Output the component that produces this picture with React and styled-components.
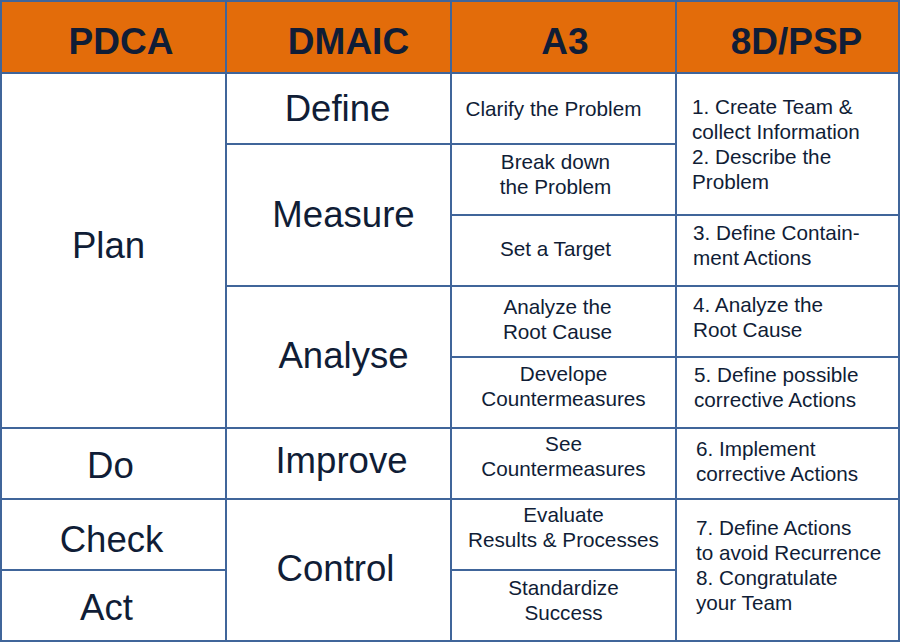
import styled, { createGlobalStyle } from "styled-components";

const theme = {
  line: "#40659a",
  orange: "#e36c0a",
  ink: "#101d36",
};

const GlobalStyle = createGlobalStyle`
  html, body {
    margin: 0;
    padding: 0;
    background: #ffffff;
  }
  body {
    font-family: "Liberation Sans", Arial, sans-serif;
    color: ${theme.ink};
  }
`;

const Table = styled.div`
  display: grid;
  grid-template-columns: 223px 223px 223px 221px;
  grid-template-rows: 70px repeat(8, 69px);
  gap: 2px;
  padding: 2px;
  width: 900px;
  box-sizing: border-box;
  background-color: ${theme.line};
`;

const Head = styled.div`
  display: flex;
  align-items: center;
  justify-content: center;
  background-color: ${theme.orange};
  font-size: 37px;
  font-weight: 700;
  padding-top: 9px;
  padding-left: ${(p) => p.$shift || 0}px;
`;

const Cell = styled.div`
  grid-column: ${(p) => p.$col};
  grid-row: ${(p) => p.$row} / span ${(p) => p.$span || 1};
  display: flex;
  align-items: center;
  justify-content: center;
  background-color: white;
`;

// $dx nudges the centred word left (<0) or right (>0)
const Phase = styled(Cell)`
  font-size: 36.6px;
  padding-bottom: ${(p) => p.$lift || 0}px;
  padding-top: ${(p) => p.$drop || 0}px;
  padding-left: ${(p) => Math.max(0, (p.$dx || 0) * 2)}px;
  padding-right: ${(p) => Math.max(0, -(p.$dx || 0) * 2)}px;
`;

const Step = styled(Cell)`
  font-size: 20.7px;
  line-height: 25px;
  text-align: center;
  padding-right: ${(p) => p.$shift || 0}px;
  padding-bottom: ${(p) => p.$lift || 0}px;
`;

const Action = styled(Cell)`
  justify-content: flex-start;
  font-size: 20.7px;
  line-height: 25px;
  padding-left: ${(p) => p.$indent || 15}px;
  padding-bottom: ${(p) => p.$lift || 0}px;
`;

export default function App() {
  return (
    <>
      <GlobalStyle />
      <Table>
        <Head $shift={15}>PDCA</Head>
        <Head $shift={20}>DMAIC</Head>
        <Head $shift={3}>A3</Head>
        <Head $shift={18}>8D/PSP</Head>

        <Phase $col={1} $row={2} $span={5} $lift={10} $dx={-5}>Plan</Phase>
        <Phase $col={1} $row={7} $drop={4} $dx={-3}>Do</Phase>
        <Phase $col={1} $row={8} $drop={10} $dx={-2}>Check</Phase>
        <Phase $col={1} $row={9} $drop={4} $dx={-7}>Act</Phase>

        <Phase $col={2} $row={2} $dx={-1}>Define</Phase>
        <Phase $col={2} $row={3} $span={2} $dx={5}>Measure</Phase>
        <Phase $col={2} $row={5} $span={2} $lift={2} $dx={5}>Analyse</Phase>
        <Phase $col={2} $row={7} $lift={6} $dx={3}>Improve</Phase>
        <Phase $col={2} $row={8} $span={2} $lift={2} $dx={-3}>Control</Phase>

        <Step $col={3} $row={2} $shift={20}>Clarify the Problem</Step>
        <Step $col={3} $row={3} $shift={16} $lift={12}>
          Break down
          <br />
          the Problem
        </Step>
        <Step $col={3} $row={4} $shift={16} $lift={4}>Set a Target</Step>
        <Step $col={3} $row={5} $shift={12} $lift={6}>
          Analyze the
          <br />
          Root Cause
        </Step>
        <Step $col={3} $row={6} $lift={14}>
          Develope
          <br />
          Countermeasures
        </Step>
        <Step $col={3} $row={7} $lift={16}>
          See
          <br />
          Countermeasures
        </Step>
        <Step $col={3} $row={8} $lift={16}>
          Evaluate
          <br />
          Results &amp; Processes
        </Step>
        <Step $col={3} $row={9} $lift={12}>
          Standardize
          <br />
          Success
        </Step>

        <Action $col={4} $row={2} $span={2}>
          1. Create Team &amp;
          <br />
          collect Information
          <br />
          2. Describe the
          <br />
          Problem
        </Action>
        <Action $col={4} $row={4} $indent={16} $lift={12}>
          3. Define Contain-
          <br />
          ment Actions
        </Action>
        <Action $col={4} $row={5} $indent={16} $lift={10}>
          4. Analyze the
          <br />
          Root Cause
        </Action>
        <Action $col={4} $row={6} $indent={17} $lift={12}>
          5. Define possible
          <br />
          corrective Actions
        </Action>
        <Action $col={4} $row={7} $indent={19} $lift={6}>
          6. Implement
          <br />
          corrective Actions
        </Action>
        <Action $col={4} $row={8} $span={2} $indent={19} $lift={10}>
          7. Define Actions
          <br />
          to avoid Recurrence
          <br />
          8. Congratulate
          <br />
          your Team
        </Action>
      </Table>
    </>
  );
}
